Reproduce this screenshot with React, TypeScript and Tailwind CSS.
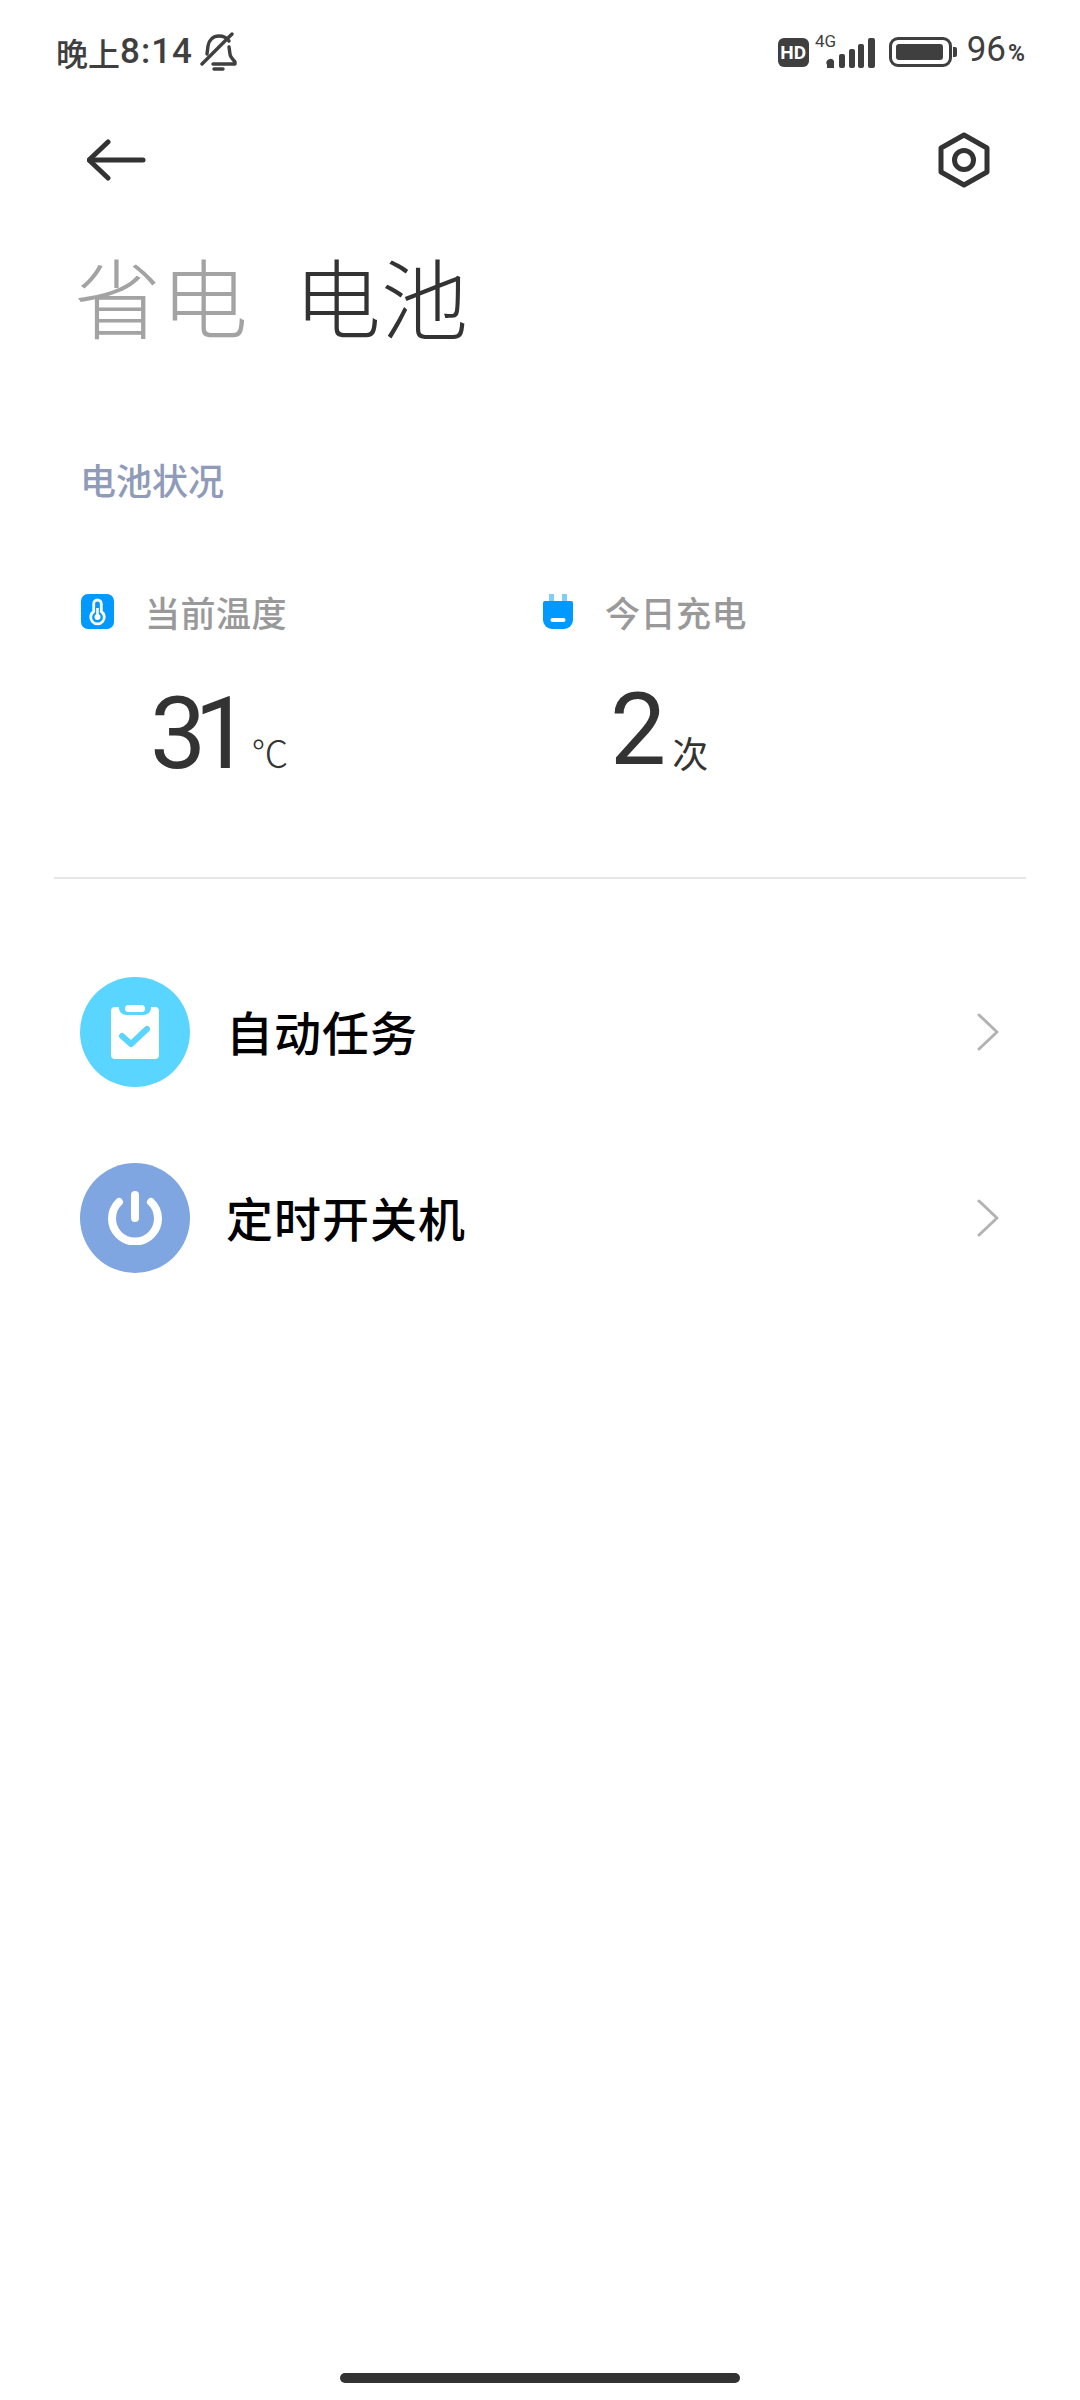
import React from 'react';

const cjk = { fontFamily: '"Noto Sans CJK SC", sans-serif' };

const BellOff = () => (
  <svg width="38" height="40" viewBox="0 0 38 40" fill="none" stroke="#3f3f3f" strokeWidth="3.4" strokeLinecap="round" strokeLinejoin="round">
    <path d="M30 9c-2-3-6-5-10-5-6 0-10 4-11 10l-1 8" />
    <path d="M30 15l1 7c0 3 3 5 5 8v2H14" />
    <path d="M33 2L3 32" />
    <path d="M15 37h9" />
  </svg>
);

const StatusRight = () => (
  <div className="flex items-center">
    <div className="w-[31px] h-[29px] rounded-[6px] bg-[#3f3f3f] text-white text-[19px] font-bold leading-[29px] text-center font-['Roboto',sans-serif]">HD</div>
    <svg width="63" height="42" viewBox="0 0 63 42" className="ml-[4px] mt-[-10px]">
      <text x="2" y="21" fontSize="17" fill="#3f3f3f" fontFamily="Roboto, sans-serif">4G</text>
      <path d="M14 42v-3a3.500 3.500 0 0 1 7-4v7z" fill="#3f3f3f" />
      <rect x="26" y="28" width="6" height="14" rx="2" fill="#3f3f3f" />
      <rect x="36" y="23" width="6" height="19" rx="2" fill="#3f3f3f" />
      <rect x="45" y="18" width="6" height="24" rx="2" fill="#3f3f3f" />
      <rect x="55" y="12" width="7" height="30" rx="2" fill="#3f3f3f" />
    </svg>
    <div className="ml-[13px] w-[63px] h-[30px] rounded-[9px] border-[3px] border-[#3f3f3f] p-[4px]">
      <div className="w-[47px] h-full rounded-[3px] bg-[#3f3f3f]" />
    </div>
    <div className="ml-[1px] w-[4px] h-[10px] rounded-r-[2px] bg-[#3f3f3f]" />
    <div className="ml-[10px] flex items-baseline text-[#3f3f3f] font-['Roboto',sans-serif]">
      <span className="text-[35px] leading-[36px]">96</span>
      <span className="ml-[2px] text-[23px] font-bold leading-[36px]">%</span>
    </div>
  </div>
);

const Stat = ({ icon, label, value, unit, unitClass, rowClass }: { icon: React.ReactNode; label: string; value: string; unit: string; unitClass: string; rowClass: string }) => (
  <div className="w-[460px]">
    <div className="flex items-center h-[40px]">
      <div className="w-[35px] flex justify-center">{icon}</div>
      <span className="ml-[30px] text-[35px] font-medium leading-[40px] text-[#999999] tracking-[0.5px]" style={cjk}>{label}</span>
    </div>
    <div className={rowClass}>
      <span className="text-[100px] leading-[100px] tracking-[-12px] text-[#333333] font-['Roboto',sans-serif]">{value}</span>
      <span className={unitClass} style={cjk}>{unit}</span>
    </div>
  </div>
);

const Row = ({ color, icon, label }: { color: string; icon: React.ReactNode; label: string }) => (
  <div className="h-[186px] pl-[80px] pr-[80px] flex items-center">
    <div className="w-[110px] h-[110px] rounded-full flex items-center justify-center" style={{ backgroundColor: color }}>{icon}</div>
    <span className="ml-[36px] mb-[3px] flex-1 text-[47px] font-medium leading-[60px] text-black tracking-[1px]" style={cjk}>{label}</span>
    <svg width="24" height="38" viewBox="0 0 24 38" fill="none" stroke="#b3b3b3" strokeWidth="3" strokeLinecap="round" strokeLinejoin="round">
      <path d="M3 2l18 17L3 36" />
    </svg>
  </div>
);

export default function App() {
  return (
    <div className="w-[1080px] h-[2400px] bg-white flex flex-col overflow-hidden">
      {/* status bar */}
      <div className="h-[104px] pl-[56px] pr-[55px] flex items-center justify-between">
        <div className="flex items-center text-[#3f3f3f]">
          <span className="text-[32px] font-medium leading-[40px]" style={cjk}>晚上</span>
          <span className="text-[35px] font-medium leading-[40px] tracking-[1px] font-['Roboto',sans-serif]">8:14</span>
          <span className="ml-[6px]"><BellOff /></span>
        </div>
        <StatusRight />
      </div>

      {/* nav */}
      <div className="h-[112px] pl-[87px] pr-[90px] flex items-center justify-between">
        <svg width="60" height="42" viewBox="0 0 60 42" fill="none" stroke="#333333" strokeWidth="5" strokeLinecap="round" strokeLinejoin="round">
          <path d="M56 21H3" />
          <path d="M21 3L2 21l19 18" />
        </svg>
        <svg width="52" height="56" viewBox="0 0 52 56" fill="none" stroke="#333333" strokeWidth="5" strokeLinejoin="round">
          <path d="M26 3l23 13v24L26 53 3 40V16z" />
          <circle cx="26" cy="28" r="9.5" />
        </svg>
      </div>

      {/* title tabs */}
      <div className="mt-[33px] pl-[74px] flex items-center h-[92px] text-[87px] leading-[92px] font-light" style={cjk}>
        <span className="text-[#a3a3a3]">省电</span>
        <span className="ml-[46px] text-[#333333]">电池</span>
      </div>

      <div className="mt-[116px] pl-[80px] text-[36px] font-medium leading-[44px] text-[#8f9bb8]" style={cjk}>电池状况</div>

      <div className="mt-[91px] pl-[80px] flex">
        <Stat
          label="当前温度"
          value="31"
          unit="℃"
          rowClass="mt-[52px] pl-[70px] flex items-baseline h-[100px]"
          unitClass="ml-[13px] text-[37px] font-light text-[#333333]"
          icon={
            <svg width="35" height="36" viewBox="0 0 35 36">
              <rect width="33" height="35" x="1" rx="7" fill="#0099ff" />
              <path d="M17.5 6a3.8 3.8 0 0 1 3.8 3.8v7.7a6.8 6.8 0 1 1-7.6 0V9.800a3.800 3.800 0 0 1 3.800-3.800z" fill="none" stroke="#ffffff" strokeWidth="2.8" />
              <circle cx="17.5" cy="23" r="3" fill="#ffffff" />
              <path d="M17.500 14v8" stroke="#ffffff" strokeWidth="2.6" />
            </svg>
          }
        />
        <Stat
          label="今日充电"
          value="2"
          unit="次"
          rowClass="mt-[48px] pl-[70px] flex items-baseline h-[100px]"
          unitClass="ml-[18px] text-[36px] text-[#333333] translate-y-[4px]"
          icon={
            <svg width="30" height="36" viewBox="0 0 30 36">
              <rect x="6" y="0" width="5" height="8" fill="#80ccff" />
              <rect x="19" y="0" width="5" height="8" fill="#80ccff" />
              <path d="M2 7h26a2 2 0 0 1 2 2v17a9 9 0 0 1-9 9H9a9 9 0 0 1-9-9V9a2 2 0 0 1 2-2z" fill="#0099ff" />
              <rect x="7.500" y="24" width="15" height="4" rx="2" fill="#ffffff" />
            </svg>
          }
        />
      </div>

      <div className="mt-[93px] mx-[54px] h-[2px] bg-[#e6e6e6]" />

      {/* list */}
      <div className="mt-[60px]">
        <Row
          color="#59d5ff"
          label="自动任务"
          icon={
            <svg width="48" height="54" viewBox="0 0 48 54">
              <path d="M4 2h4a7 7 0 0 0 7 8h18a7 7 0 0 0 7-8h4a4 4 0 0 1 4 4v44a4 4 0 0 1-4 4H4a4 4 0 0 1-4-4V6a4 4 0 0 1 4-4z" fill="#ffffff" />
              <rect x="14" y="0" width="20" height="7" rx="3.500" fill="#ffffff" />
              <path d="M11 31l9 8 16-15" fill="none" stroke="#59d5ff" strokeWidth="6" strokeLinecap="round" strokeLinejoin="round" />
            </svg>
          }
        />
        <Row
          color="#7fa6e0"
          label="定时开关机"
          icon={
            <svg width="54" height="54" viewBox="0 0 54 54" fill="none" stroke="#ffffff" strokeWidth="8" strokeLinecap="round">
              <path d="M27 4v23" />
              <path d="M11 11a23 23 0 1 0 32 0" />
            </svg>
          }
        />
      </div>

      {/* home indicator */}
      <div className="mt-auto mb-[17px] mx-auto w-[400px] h-[10px] rounded-full bg-[#333333]" />
    </div>
  );
}
